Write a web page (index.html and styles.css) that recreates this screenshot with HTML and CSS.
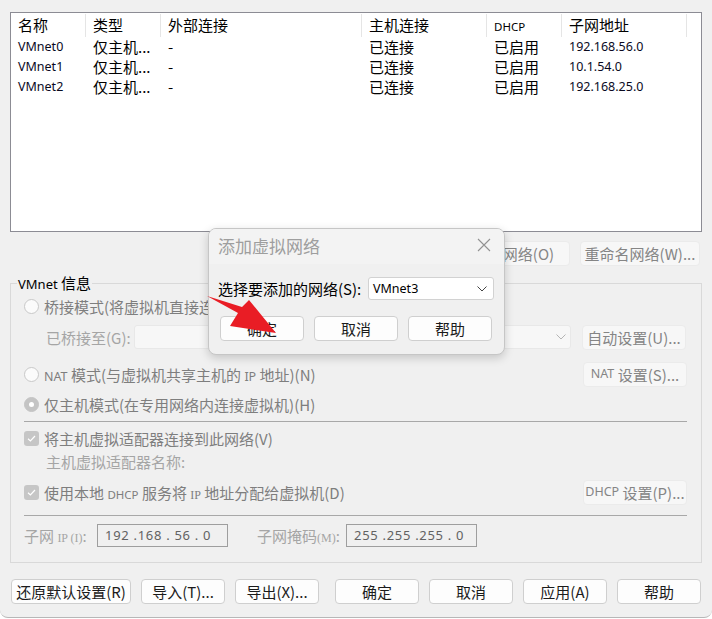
FILE: index.html
```html
<!DOCTYPE html>
<html lang="zh-CN">
<head>
<meta charset="utf-8">
<title>虚拟网络编辑器</title>
<link rel="stylesheet" href="styles.css">
</head>
<body>
<div class="window">
  <div class="list">
    <div class="list-head">
      <div class="hc">名称</div>
      <div class="hc">类型</div>
      <div class="hc">外部连接</div>
      <div class="hc">主机连接</div>
      <div class="hc"><span class="lat-s">DHCP</span></div>
      <div class="hc">子网地址</div>
    </div>
    <div class="list-row">
      <div class="c lat">VMnet0</div><div class="c">仅主机...</div><div class="c">-</div><div class="c">已连接</div><div class="c">已启用</div><div class="c lat">192.168.56.0</div>
    </div>
    <div class="list-row">
      <div class="c lat">VMnet1</div><div class="c">仅主机...</div><div class="c">-</div><div class="c">已连接</div><div class="c">已启用</div><div class="c lat">10.1.54.0</div>
    </div>
    <div class="list-row">
      <div class="c lat">VMnet2</div><div class="c">仅主机...</div><div class="c">-</div><div class="c">已连接</div><div class="c">已启用</div><div class="c lat">192.168.25.0</div>
    </div>
  </div>

  <div class="net-actions">
    <button class="btn dis w-add">添加网络(E)...</button>
    <button class="btn dis w-rm">移除网络(O)</button>
    <button class="btn dis w-ren">重命名网络(W)...</button>
  </div>

  <fieldset class="group">
    <legend class="legend"><span class="lat">VMnet</span> 信息</legend>
    <div class="gbody">
      <div class="row r-bridge"><span class="radio"></span><span class="dlabel">桥接模式(将虚拟机直接连接到外部网络)(B)</span></div>
      <div class="row r-bridged">
        <span class="flabel w-bl">已桥接至(G):</span>
        <div class="combo"><svg class="chev" viewBox="0 0 10 6" width="10" height="6"><path d="M0.5 0.5 L5 5 L9.5 0.5" fill="none" stroke="#b4b4b4" stroke-width="1"/></svg></div>
        <button class="btn dis w-side">自动设置(U)...</button>
      </div>
      <div class="row r-nat">
        <span class="radio"></span><span class="dlabel"><span class="lat">NAT</span> 模式(与虚拟机共享主机的 <span class="lat">IP</span> 地址)(N)</span>
        <button class="btn dis w-side push"><span class="lat">NAT</span>&nbsp;设置(S)...</button>
      </div>
      <div class="row r-host"><span class="radio on"></span><span class="dlabel">仅主机模式(在专用网络内连接虚拟机)(H)</span></div>
      <div class="sep s1"></div>
      <div class="row r-c1"><span class="check"><svg viewBox="0 0 15 15" width="15" height="15"><path d="M4 7.8 L6.4 10 L11 5" fill="none" stroke="#fff" stroke-width="1.2"/></svg></span><span class="dlabel">将主机虚拟适配器连接到此网络(V)</span></div>
      <div class="row r-name"><span class="flabel ind">主机虚拟适配器名称:</span></div>
      <div class="row r-c2">
        <span class="check"><svg viewBox="0 0 15 15" width="15" height="15"><path d="M4 7.8 L6.4 10 L11 5" fill="none" stroke="#fff" stroke-width="1.2"/></svg></span>
        <span class="dlabel">使用本地 <span class="lat-s">DHCP</span> 服务将 <span class="ser">IP</span> 地址分配给虚拟机(D)</span>
        <button class="btn dis w-side push"><span class="lat">DHCP</span>&nbsp;设置(P)...</button>
      </div>
      <div class="sep s2"></div>
      <div class="row r-subnet">
        <span class="flabel w-ip">子网 <span class="ser">IP (I)</span>:</span>
        <div class="ipbox">192 .168 . 56 . 0</div>
        <span class="flabel w-mask">子网掩码<span class="ser">(M)</span>:</span>
        <div class="ipbox">255 .255 .255 . 0</div>
      </div>
    </div>
  </fieldset>

  <div class="footer">
    <div class="fgroup">
      <button class="btn std w-reset">还原默认设置(R)</button>
      <button class="btn std">导入(T)...</button>
      <button class="btn std">导出(X)...</button>
    </div>
    <div class="fgroup right">
      <button class="btn std">确定</button>
      <button class="btn std">取消</button>
      <button class="btn std">应用(A)</button>
      <button class="btn std">帮助</button>
    </div>
  </div>
</div>

<div class="dialog">
  <div class="dlg-title">
    <span class="dlg-caption">添加虚拟网络</span>
    <svg class="close" viewBox="0 0 14 14" width="14" height="14"><path d="M1 1 L13 13 M13 1 L1 13" stroke="#929292" stroke-width="1.1" fill="none"/></svg>
  </div>
  <div class="dlg-body">
    <div class="dlg-field">
      <span>选择要添加的网络(S):</span>
      <div class="select"><span class="lat">VMnet3</span><svg viewBox="0 0 10 6" width="10" height="6"><path d="M0.5 0.5 L5 5 L9.5 0.5" fill="none" stroke="#444" stroke-width="1"/></svg></div>
    </div>
    <div class="dlg-btns">
      <button class="btn std">确定</button>
      <button class="btn std">取消</button>
      <button class="btn std">帮助</button>
    </div>
  </div>
</div>

<svg class="arrow" viewBox="0 0 712 619" width="712" height="619">
  <polygon points="207,296 242,307 249,300 276,333 230,326 238,313" fill="#e91d25"/>
</svg>
</body>
</html>
```

FILE: styles.css
```css
* { box-sizing: border-box; }
html, body { margin: 0; padding: 0; }
body {
  width: 712px;
  height: 619px;
  overflow: hidden;
  position: relative;
  background: #ffffff;
  font-family: "Noto Sans CJK SC", "Noto Sans", sans-serif;
  font-size: 15px;
  color: #000;
}
.lat { font-family: "Noto Sans", "Noto Sans CJK SC", sans-serif; font-size: 12.5px; }
.lat-s { font-family: "Noto Sans", "Noto Sans CJK SC", sans-serif; font-size: 11.5px; }
.ser { font-family: "Liberation Serif", serif; font-size: 12px; }

.window {
  height: 618px;
  background: #f0f0f0;
  padding: 12px 10px 0;
  border-bottom: 1px solid #b7b7b7;
  border-radius: 0 0 8px 8px;
}

/* list view */
.list {
  height: 220px;
  border: 1px solid #8c8c94;
  background: #fff;
}
.list-head, .list-row {
  display: grid;
  grid-template-columns: 75px 75px 201px 125px 75px 125px;
}
.list-head { height: 24px; }
.hc {
  height: 24px;
  line-height: 23px;
  padding-left: 7px;
  position: relative;
  white-space: nowrap;
}
.hc::after {
  content: "";
  position: absolute;
  right: 0;
  top: 1px;
  bottom: 0;
  width: 1px;
  background: #e5e5e5;
}
.list-row { height: 20px; }
.c {
  height: 20px;
  line-height: 19px;
  padding-left: 7px;
  white-space: nowrap;
  color: #000;
}
.c.lat { color: #0a0a1e; }

/* buttons */
.btn {
  font: inherit;
  height: 25px;
  margin: 0;
  padding: 0;
  border-radius: 4px;
  display: flex;
  align-items: center;
  justify-content: center;
  white-space: nowrap;
  line-height: 1;
}
.btn.dis {
  background: #f7f7f7;
  border: 1px solid #ebebeb;
  color: #858585;
}
.btn.std {
  background: #fdfdfd;
  border: 1px solid #cfcfcf;
  color: #1b1b1b;
  width: 84px;
}

.net-actions {
  margin-top: 9px;
  height: 25px;
  display: flex;
  justify-content: flex-end;
  gap: 10px;
  padding-right: 2px;
}
.w-add { width: 120px; }
.w-rm { width: 113px; }
.w-ren { width: 120px; }

/* group box */
.group {
  margin: 7px 0 0;
  padding: 0;
  min-width: 0;
  border: 1px solid #d9d9d9;
}
.legend {
  margin-left: 6px;
  padding: 0 1px;
  height: 20px;
  line-height: 20px;
  color: #000;
}
.legend .lat { font-size: 13px; }
.gbody {
  padding: 0 14px 15px 13px;
  display: flex;
  flex-direction: column;
}
.row {
  display: flex;
  align-items: center;
  white-space: nowrap;
}
.r-bridge { height: 26px; }
.r-bridged { height: 24px; margin-top: 6px; }
.r-nat { height: 24px; margin-top: 13px; }
.r-host { height: 20px; margin-top: 8px; }
.sep { height: 1px; background: #a8a8a8; }
.s1 { margin-top: 7px; }
.r-c1 { height: 20px; margin-top: 6px; }
.r-name { height: 20px; margin-top: 3px; }
.r-c2 { height: 24px; margin-top: 9px; }
.s2 { margin-top: 11px; }
.r-subnet { height: 23px; margin-top: 8px; }

.radio {
  width: 15px;
  height: 15px;
  border-radius: 50%;
  border: 1px solid #c8c8c8;
  background: #fbfbfb;
  flex: none;
  margin-right: 5px;
  position: relative;
}
.radio.on {
  background: #c4c4c4;
  border-color: #c4c4c4;
}
.radio.on::after {
  content: "";
  position: absolute;
  left: 4px;
  top: 4px;
  width: 5px;
  height: 5px;
  border-radius: 50%;
  background: #fff;
}
.check {
  width: 15px;
  height: 15px;
  border-radius: 3px;
  background: #c6c6c6;
  flex: none;
  margin-right: 5px;
  display: flex;
}
.dlabel { color: #7e7e7e; }
.flabel { color: #a5a5a5; }
.flabel.ind, .w-bl { padding-left: 22px; }
.w-bl { width: 110px; flex: none; }
.combo {
  width: 437px;
  height: 24px;
  background: #f7f7f7;
  border: 1px solid #e8e8e8;
  border-radius: 3px;
  display: flex;
  align-items: center;
  justify-content: flex-end;
  padding-right: 4px;
  flex: none;
}
.w-side { width: 104px; margin-left: 11px; flex: none; }
.push { margin-left: auto; }

.w-ip { width: 73px; flex: none; }
.w-mask { width: 89px; margin-left: 29px; flex: none; }
.ipbox {
  width: 131px;
  height: 23px;
  border: 1px solid #9e9e9e;
  background: #f0f0f0;
  padding-left: 7px;
  font-family: "Noto Sans", sans-serif;
  font-size: 13px;
  letter-spacing: 0.7px;
  color: #626262;
  white-space: pre;
  line-height: 21px;
  flex: none;
}

/* footer */
.footer {
  margin-top: 16px;
  display: flex;
  justify-content: space-between;
  padding: 0 1px;
}
.fgroup { display: flex; gap: 10px; }
.fgroup.right { gap: 10px; }
.fgroup .w-reset { width: 120px; }

/* dialog */
.dialog {
  position: absolute;
  left: 208px;
  top: 228px;
  width: 297px;
  height: 127px;
  border: 1px solid #c6c6c6;
  border-radius: 8px;
  background: #f0f0f0;
  box-shadow: 0 3px 10px rgba(0, 0, 0, 0.18);
  overflow: hidden;
}
.dlg-title {
  height: 35px;
  background: #f3f3f3;
  display: flex;
  align-items: center;
  justify-content: space-between;
  padding: 0 13px 3px 9px;
}
.dlg-caption { font-size: 17px; color: #9e9e9e; }
.dlg-body { padding: 13px 10px 0 9px; }
.dlg-field {
  height: 23px;
  display: flex;
  align-items: center;
  justify-content: space-between;
  white-space: nowrap;
}
.select {
  width: 126px;
  height: 23px;
  background: #fff;
  border: 1px solid #d2d2d2;
  border-radius: 3px;
  display: flex;
  align-items: center;
  justify-content: space-between;
  padding: 0 6px 0 4px;
}
.dlg-btns {
  margin-top: 16px;
  display: flex;
  gap: 10px;
  padding-left: 2px;
}
.dlg-btns .btn { height: 25px; }

.arrow {
  position: absolute;
  left: 0;
  top: 0;
  pointer-events: none;
}
```
